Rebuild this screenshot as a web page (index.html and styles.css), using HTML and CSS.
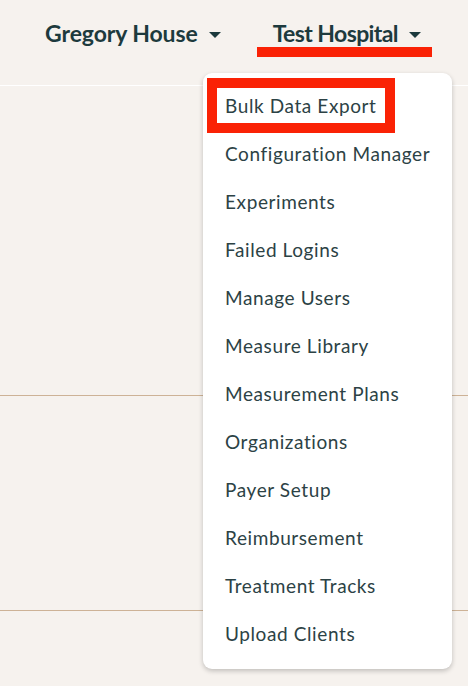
FILE: index.html
```html
<!DOCTYPE html>
<html>
<head>
<meta charset="utf-8">
<link rel="stylesheet" href="styles.css">
</head>
<body>
<header class="topbar">
  <nav class="nav">
    <div class="nav-item">Gregory House <span class="caret"></span></div>
    <div class="nav-item active">Test Hospital <span class="caret"></span><span class="underline"></span></div>
  </nav>
</header>
<main class="content">
  <section class="row row-1"></section>
  <section class="row row-2"></section>
</main>
<div class="menu">
  <ul class="menu-list">
    <li class="menu-item">Bulk Data Export</li>
    <li class="menu-item">Configuration Manager</li>
    <li class="menu-item">Experiments</li>
    <li class="menu-item">Failed Logins</li>
    <li class="menu-item">Manage Users</li>
    <li class="menu-item">Measure Library</li>
    <li class="menu-item">Measurement Plans</li>
    <li class="menu-item">Organizations</li>
    <li class="menu-item">Payer Setup</li>
    <li class="menu-item">Reimbursement</li>
    <li class="menu-item">Treatment Tracks</li>
    <li class="menu-item">Upload Clients</li>
  </ul>
  <div class="highlight"></div>
</div>
</body>
</html>
```

FILE: styles.css
```css
* { box-sizing: border-box; }
html, body {
  margin: 0;
  padding: 0;
  background: #f6f2ee;
  font-family: Lato, "Noto Sans", sans-serif;
  width: 468px;
  height: 686px;
  overflow: hidden;
}
.topbar {
  height: 86px;
  border-bottom: 1px solid #ffffff;
  display: flex;
  justify-content: flex-end;
}
.nav {
  display: flex;
  gap: 52px;
  padding: 20px 47px 0 0;
}
.nav-item {
  position: relative;
  font-size: 23px;
  font-weight: 700;
  color: #1d3a3d;
  display: flex;
  align-items: center;
  height: 26px;
  letter-spacing: -0.1px;
}
.nav-item.active {
  letter-spacing: -0.6px;
}
.caret {
  display: inline-block;
  width: 0;
  height: 0;
  margin-left: 11px;
  margin-top: 4px;
  border-left: 6px solid transparent;
  border-right: 6px solid transparent;
  border-top: 6px solid #1d3a3d;
}
.underline {
  position: absolute;
  left: -16px;
  right: -11px;
  top: 27px;
  height: 10px;
  background: #fa2205;
}
.row-1 {
  height: 310px;
  border-bottom: 1px solid #cdb296;
}
.row-2 {
  height: 215px;
  border-bottom: 1px solid #cdb296;
}
.menu {
  position: absolute;
  left: 203px;
  top: 73px;
  width: 249px;
  background: #ffffff;
  border-radius: 9px;
  box-shadow: 0 2px 5px rgba(0,0,0,0.22);
  padding: 9px 0 11px;
}
.menu-list {
  list-style: none;
  margin: 0;
  padding: 0;
}
.menu-item {
  height: 48px;
  line-height: 48px;
  padding-left: 22px;
  font-size: 19px;
  letter-spacing: 0.6px;
  color: #2c4245;
  white-space: nowrap;
}
.highlight {
  position: absolute;
  left: 4px;
  top: 5px;
  width: 188px;
  height: 55px;
  border: 10px solid #fa2205;
}
```
